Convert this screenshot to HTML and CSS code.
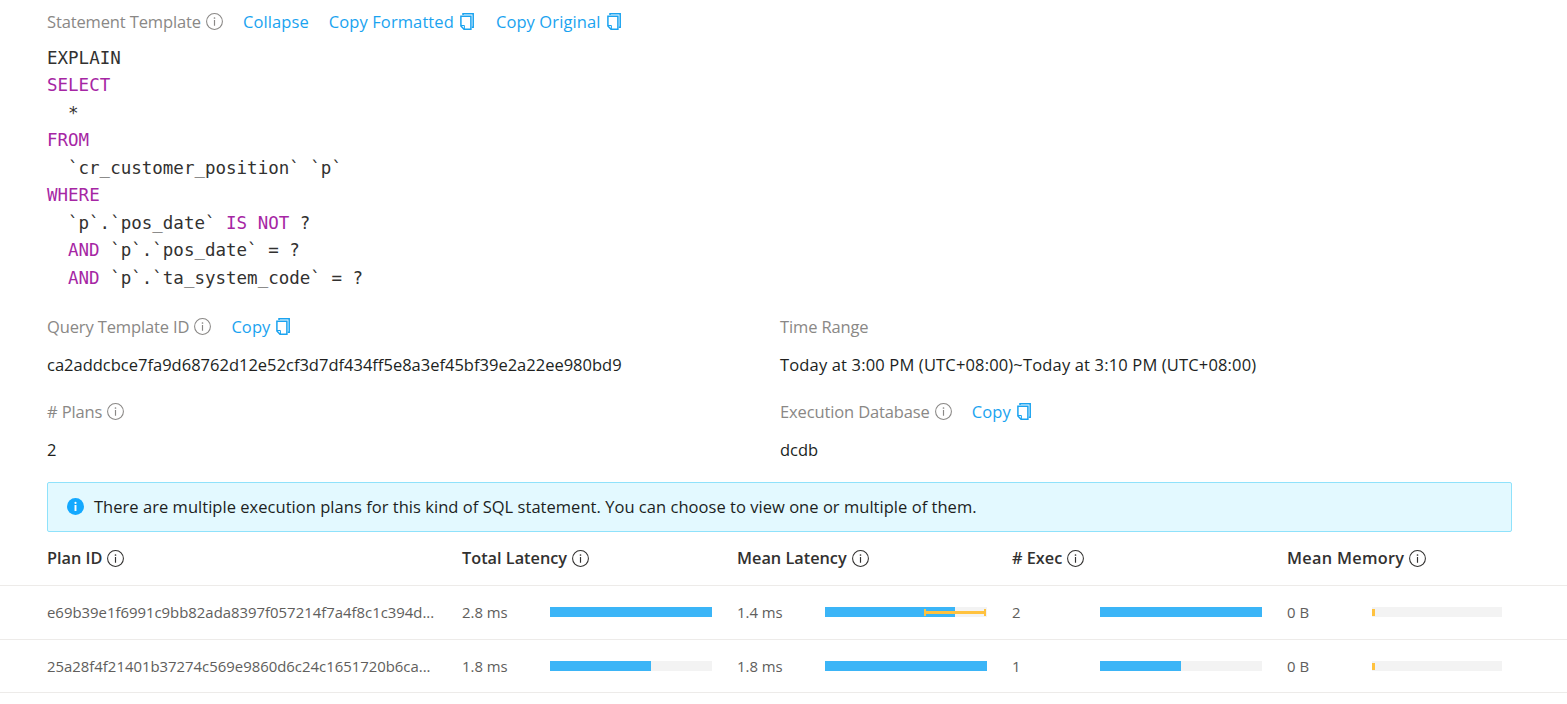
FILE: index.html
```html
<!DOCTYPE html>
<html lang="en">
<head>
<meta charset="utf-8">
<title>Statement</title>
<link rel="stylesheet" href="styles.css">
</head>
<body>
<svg class="defs" width="0" height="0" aria-hidden="true">
  <symbol id="info" viewBox="0 0 16 16">
    <circle cx="8" cy="8" r="7.45" fill="none" stroke="currentColor" stroke-width="1"/>
    <circle cx="8" cy="4.7" r=".8" fill="currentColor"/>
    <rect x="7.45" y="6.6" width="1.1" height="5.4" fill="currentColor"/>
  </symbol>
  <symbol id="copy" viewBox="0 0 14 17">
    <path d="M3 2V.8h10.2v13.4h-1.4" fill="none" stroke="currentColor" stroke-width="1.5"/>
    <path d="M.9 3.2h10v13H4L.9 13z" fill="none" stroke="currentColor" stroke-width="1.5"/>
    <path d="M1 12.5h3.4v3.6" fill="none" stroke="currentColor" stroke-width="1"/>
  </symbol>
</svg>
<main class="page">
  <section class="statement">
    <div class="label-row">
      <span class="label">Statement Template</span>
      <svg class="info"><use href="#info"/></svg>
      <a class="link">Collapse</a>
      <a class="link">Copy Formatted<svg class="copy"><use href="#copy"/></svg></a>
      <a class="link">Copy Original<svg class="copy"><use href="#copy"/></svg></a>
    </div>
    <div class="sql">
      <div class="line">EXPLAIN</div>
      <div class="line kw">SELECT</div>
      <div class="line indent">*</div>
      <div class="line kw">FROM</div>
      <div class="line indent">`cr_customer_position` `p`</div>
      <div class="line kw">WHERE</div>
      <div class="line indent">`p`.`pos_date` <b>IS NOT</b> ?</div>
      <div class="line indent"><b>AND</b> `p`.`pos_date` = ?</div>
      <div class="line indent"><b>AND</b> `p`.`ta_system_code` = ?</div>
    </div>
  </section>
  <section class="details">
    <div class="detail">
      <div class="label-row"><span class="label">Query Template ID</span><svg class="info"><use href="#info"/></svg><a class="link">Copy<svg class="copy"><use href="#copy"/></svg></a></div>
      <div class="value">ca2addcbce7fa9d68762d12e52cf3d7df434ff5e8a3ef45bf39e2a22ee980bd9</div>
    </div>
    <div class="detail">
      <div class="label-row"><span class="label">Time Range</span></div>
      <div class="value range">Today at 3:00 PM (UTC+08:00)~Today at 3:10 PM (UTC+08:00)</div>
    </div>
    <div class="detail">
      <div class="label-row"><span class="label"># Plans</span><svg class="info"><use href="#info"/></svg></div>
      <div class="value">2</div>
    </div>
    <div class="detail">
      <div class="label-row"><span class="label">Execution Database</span><svg class="info"><use href="#info"/></svg><a class="link">Copy<svg class="copy"><use href="#copy"/></svg></a></div>
      <div class="value">dcdb</div>
    </div>
  </section>
  <div class="alert">
    <svg class="alert-icon" viewBox="0 0 16 16"><circle cx="8" cy="8" r="8" fill="#14a9ff"/><circle cx="8" cy="4.6" r="1" fill="#fff"/><rect x="7.1" y="6.6" width="1.8" height="5.6" fill="#fff"/></svg>
    <span>There are multiple execution plans for this kind of SQL statement. You can choose to view one or multiple of them.</span>
  </div>
  <section class="table">
    <div class="row head">
      <div class="cell">Plan ID<svg class="info"><use href="#info"/></svg></div>
      <div class="cell">Total Latency<svg class="info"><use href="#info"/></svg></div>
      <div class="cell">Mean Latency<svg class="info"><use href="#info"/></svg></div>
      <div class="cell"># Exec<svg class="info"><use href="#info"/></svg></div>
      <div class="cell wide">Mean Memory<svg class="info"><use href="#info"/></svg></div>
    </div>
    <div class="row">
      <div class="cell plan">e69b39e1f6991c9bb82ada8397f057214f7a4f8c1c394d...</div>
      <div class="cell"><span class="num">2.8 ms</span><div class="bar"><i style="width:100%"></i></div></div>
      <div class="cell"><span class="num">1.4 ms</span><div class="bar"><i style="width:80%"></i><em class="err"></em></div></div>
      <div class="cell"><span class="num">2</span><div class="bar"><i style="width:100%"></i></div></div>
      <div class="cell"><span class="num mem">0 B</span><div class="bar small"><u></u></div></div>
    </div>
    <div class="row">
      <div class="cell plan">25a28f4f21401b37274c569e9860d6c24c1651720b6ca...</div>
      <div class="cell"><span class="num">1.8 ms</span><div class="bar"><i style="width:62.3%"></i></div></div>
      <div class="cell"><span class="num">1.8 ms</span><div class="bar"><i style="width:100%"></i></div></div>
      <div class="cell"><span class="num">1</span><div class="bar"><i style="width:50%"></i></div></div>
      <div class="cell"><span class="num mem">0 B</span><div class="bar small"><u></u></div></div>
    </div>
  </section>
</main>
</body>
</html>
```
FILE: styles.css
```css
* { box-sizing: border-box; }
html, body { margin: 0; padding: 0; background: #fff; }
body { font-family: "Open Sans", "Noto Sans", sans-serif; font-size: 16.5px; color: #323130; overflow: hidden; }
.defs { position: absolute; }
.page { height: 704px; overflow: hidden; }
.statement, .details, .alert { margin-left: 47px; margin-right: 55px; }
.statement { padding-top: 8px; }
.label-row { display: flex; align-items: center; height: 26px; }
.label { color: #8a8886; letter-spacing: -.13px; }
.info { width: 17px; height: 17px; margin-left: 5px; color: #8a8886; flex: none; }
.link { color: #1aa3f0; margin-left: 20px; letter-spacing: .1px; display: inline-flex; align-items: center; }
.copy { width: 14px; height: 17px; margin-left: 6px; margin-right: 2px; color: #1aa3f0; }
.sql { margin-top: 10.75px; font-family: "DejaVu Sans Mono", monospace; font-size: 17.5px; line-height: 27.5px; color: #323130; }
.line { white-space: pre; }
.indent { padding-left: 21px; }
.kw, .sql b { font-weight: 400; color: #a626a4; }
.details { display: grid; grid-template-columns: 733px 1fr; margin-top: 21.25px; }
.detail { height: 85px; }
.value { margin-top: 13px; line-height: 24px; color: #201f1e; }
.value.range { letter-spacing: .16px; }
.alert { height: 50px; margin-top: -2px; display: flex; align-items: center; gap: 10px; padding-left: 19px; background: #e3f9ff; border: 1px solid #8fe2fb; border-radius: 2px; color: #201f1e; letter-spacing: .035px; }
.alert-icon { width: 17px; height: 17px; flex: none; }
.row { display: grid; grid-template-columns: 415px 275px 275px 275px 1fr; padding-left: 47px; height: 54px; border-bottom: 1px solid #edebe9; align-items: center; }
.row:last-child { height: 53px; }
.row.head { font-weight: 600; font-size: 16.3px; color: #323130; }
.head .info { color: #323130; }
.head .wide { letter-spacing: .3px; }
.cell { display: flex; align-items: center; }
.plan, .num { font-size: 14.9px; color: #605e5c; }
.plan { white-space: nowrap; }
.num { width: 88px; flex: none; }
.num.mem { width: 85px; }
.bar { position: relative; width: 162px; height: 10px; background: #f3f3f3; flex: none; }
.bar.small { width: 130px; }
.bar i { display: block; height: 100%; background: #3bb5f7; }
.bar u { position: absolute; left: 0; top: 2px; width: 3px; height: 7px; background: #ffc23f; }
.err { position: absolute; left: 99px; right: 1px; top: 4px; height: 3px; background: #ffc23f; }
.err::before, .err::after { content: ""; position: absolute; top: -2px; width: 2px; height: 7px; background: #ffc23f; }
.err::before { left: 0; }
.err::after { right: 0; }
```
